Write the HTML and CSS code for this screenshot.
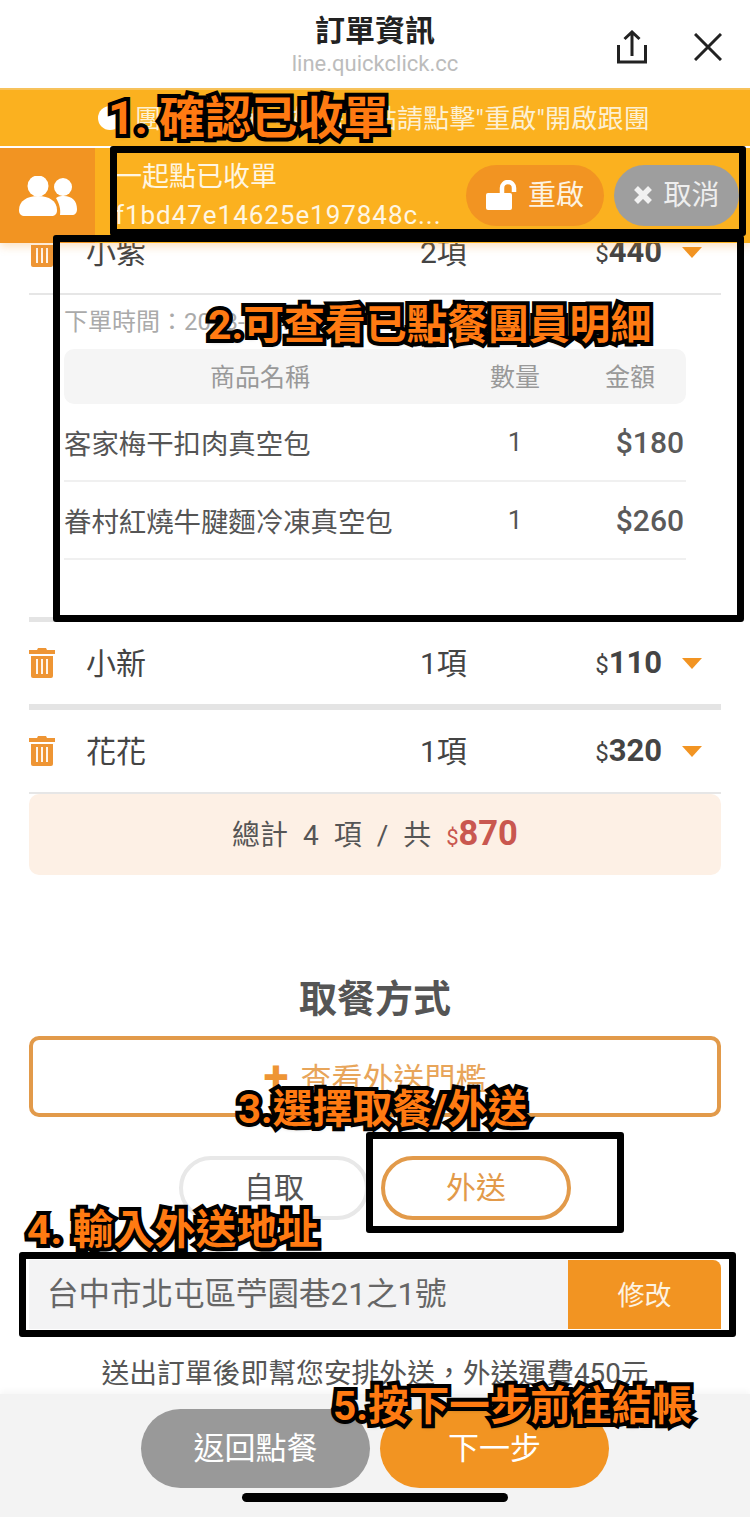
FILE: index.html
```html
<!DOCTYPE html>
<html lang="zh-Hant">
<head>
<meta charset="utf-8">
<title>訂單資訊</title>
<link rel="stylesheet" href="styles.css">
</head>
<body>
<div class="app">
  <header class="nav">
    <div></div>
    <div class="nav-title">
      <div class="nav-name">訂單資訊</div>
      <div class="nav-host">line.quickclick.cc</div>
    </div>
    <div class="nav-actions">
      <svg class="share" viewBox="0 0 30 34" width="30" height="34"><path d="M1.500 15v17h27V15M15 26V2M7.500 9 15 2l7.500 7" fill="none" stroke="#222" stroke-width="3"/></svg>
      <svg class="close" viewBox="0 0 28 28" width="28" height="28"><path d="M1 1l26 26M27 1 1 27" fill="none" stroke="#222" stroke-width="3"/></svg>
    </div>
  </header>

  <div class="top">
    <div class="notice">
      <span class="notice-dot"></span>
      <span class="notice-text">團長已收單，如需加點請點擊"重啟"開啟跟團</span>
    </div>
    <div class="group">
      <div class="group-icon">
        <svg viewBox="0 0 58 40" width="58" height="40" fill="#fff"><circle cx="19" cy="10" r="10.500"/><circle cx="44" cy="11" r="9"/><path d="M0 34c0-9 8-14 19-14s19 5 19 14c0 4-2 6-6 6H6c-4 0-6-2-6-6z"/><path d="M37 22c3-2 5-2 8-2 8 0 13 5 13 13 0 4-2 6-5 6H41c1-6-1-12-4-17z"/></svg>
      </div>
      <div class="group-info">
        <div>一起點已收單</div>
        <div class="group-id">f1bd47e14625e197848c...</div>
      </div>
      <button class="pill pill-reopen">
        <svg viewBox="0 0 32 30" width="32" height="30"><rect x="0" y="13" width="26" height="17" rx="2" fill="#fff"/><path d="M16 14V8a6 6 0 0 1 12 0v4" fill="none" stroke="#fff" stroke-width="4.500"/></svg>
        <span class="pill-label">重啟</span>
      </button>
      <button class="pill pill-cancel">
        <svg viewBox="0 0 20 20" width="20" height="20"><path d="M3 3l14 14M17 3 3 17" stroke="#f1f1f1" stroke-width="5.500" fill="none"/></svg>
        <span class="pill-label">取消</span>
      </button>
    </div>
  </div>

  <main class="orders">
    <div class="order order-line">
      <svg class="trash" viewBox="0 0 26 30"><path d="M9 0h8l1 2h8v4H0V2h8z" fill="#ee9534"/><path d="M2 8h22v20a2 2 0 0 1-2 2H4a2 2 0 0 1-2-2z" fill="#ee9534"/><path d="M8 11v15M13 11v15M18 11v15" stroke="#fff" stroke-width="1.800"/></svg>
      <span class="order-name">小紫</span>
      <span class="order-count">2項</span>
      <span class="order-price"><small>$</small><b>440</b></span>
      <span class="caret"></span>
    </div>
    <section class="detail">
      <div class="detail-time">下單時間：2023-03-10</div>
      <div class="grid-row grid-head">
        <span>商品名稱</span><span>數量</span><span>金額</span>
      </div>
      <div class="grid-row grid-item">
        <span>客家梅干扣肉真空包</span><span class="qty">1</span><span class="amt">$180</span>
      </div>
      <div class="grid-row grid-item">
        <span>眷村紅燒牛腱麵冷凍真空包</span><span class="qty">1</span><span class="amt">$260</span>
      </div>
    </section>
    <div class="order order-thick">
      <svg class="trash" viewBox="0 0 26 30"><path d="M9 0h8l1 2h8v4H0V2h8z" fill="#ee9534"/><path d="M2 8h22v20a2 2 0 0 1-2 2H4a2 2 0 0 1-2-2z" fill="#ee9534"/><path d="M8 11v15M13 11v15M18 11v15" stroke="#fff" stroke-width="1.800"/></svg>
      <span class="order-name">小新</span>
      <span class="order-count">1項</span>
      <span class="order-price"><small>$</small><b>110</b></span>
      <span class="caret"></span>
    </div>
    <div class="order order-line">
      <svg class="trash" viewBox="0 0 26 30"><path d="M9 0h8l1 2h8v4H0V2h8z" fill="#ee9534"/><path d="M2 8h22v20a2 2 0 0 1-2 2H4a2 2 0 0 1-2-2z" fill="#ee9534"/><path d="M8 11v15M13 11v15M18 11v15" stroke="#fff" stroke-width="1.800"/></svg>
      <span class="order-name">花花</span>
      <span class="order-count">1項</span>
      <span class="order-price"><small>$</small><b>320</b></span>
      <span class="caret"></span>
    </div>
    <div class="total"><span>總計 4 項 / 共 <span class="total-sum"><small>$</small><b>870</b></span></span></div>

    <h2 class="pick-title">取餐方式</h2>
    <button class="threshold"><span class="plus">+</span>查看外送門檻</button>
    <div class="toggle">
      <button class="toggle-btn">自取</button>
      <button class="toggle-btn toggle-on">外送</button>
    </div>
    <div class="address">
      <span class="address-text">台中市北屯區苧園巷21之1號</span>
      <button class="address-edit">修改</button>
    </div>
    <p class="hint">送出訂單後即幫您安排外送，外送運費450元</p>
  </main>

  <footer class="bottom">
    <div class="bottom-btns">
      <button class="cta cta-back">返回點餐</button>
      <button class="cta cta-next">下一步</button>
    </div>
    <div class="home"></div>
  </footer>

  <div class="frame frame-1"></div>
  <div class="frame frame-2"></div>
  <div class="frame frame-3"></div>
  <div class="frame frame-4"></div>
  <div class="callout callout-1">1. 確認已收單</div>
  <div class="callout callout-2">2.可查看已點餐團員明細</div>
  <div class="callout callout-3">3.選擇取餐/外送</div>
  <div class="callout callout-4">4. 輸入外送地址</div>
  <div class="callout callout-5">5.按下一步前往結帳</div>
</div>
</body>
</html>
```
FILE: styles.css
```css
* { box-sizing: border-box; }
html, body { margin: 0; padding: 0; background: #fff; }
body { font-family: Roboto, "Noto Sans CJK TC", sans-serif; color: #444; }
button { font-family: inherit; border: 0; padding: 0; background: none; }
.app { position: relative; width: 750px; height: 1517px; overflow: hidden; background: #fff; }

.nav { height: 88px; display: grid; grid-template-columns: 1fr auto 1fr; align-items: start; background: #fff; position: relative; z-index: 3; }
.nav-title { text-align: center; padding-top: 11px; }
.nav-name { font-size: 30px; line-height: 40px; font-weight: 700; color: #222; }
.nav-host { font-size: 22px; line-height: 26px; color: #bcbcbc; }
.nav-actions { display: flex; justify-content: flex-end; gap: 47px; padding: 30px 28px 0 0; }
.close { margin-top: 3px; }

.top { position: relative; z-index: 2; box-shadow: 0 4px 8px rgba(242, 148, 34, .25); }
.notice { height: 58px; background: #fbb11f; border-top: 2px solid #f7c25b; display: flex; align-items: center; gap: 13px; padding: 0 0 4px 98px; font-size: 26px; color: #fdf0d2; white-space: nowrap; }
.notice-dot { width: 24px; height: 24px; border-radius: 50%; background: #fff; flex: none; margin-top: 4px; }
.notice-text { letter-spacing: .2px; }
.group { margin-top: 2px; height: 95px; background: #fbb11f; display: flex; align-items: center; }
.group-icon { width: 95px; height: 95px; background: #f29422; display: flex; align-items: center; justify-content: center; flex: none; }
.group-info { width: 351px; margin-left: 20px; font-size: 27px; line-height: 38px; color: #fff6e2; white-space: nowrap; flex: none; }
.group-id { font-size: 26px; letter-spacing: .95px; }
.pill { height: 61px; border-radius: 31px; display: flex; align-items: center; justify-content: center; font-size: 28px; color: #fdf3e2; flex: none; margin-top: -1px; }
.pill-label { position: relative; top: -2px; }
.pill-reopen { width: 138px; background: #f29422; gap: 10px; }
.pill-cancel { width: 125px; background: #9e9e9e; gap: 10px; margin-left: 10px; color: #eee; }

.orders { margin: -32px 29px 0; position: relative; z-index: 1; }
.order { height: 84px; display: grid; grid-template-columns: 57px 334px 100px 142px 59px; align-items: center; font-size: 30px; color: #444; }
.order-line { height: 84px; border-bottom: 2px solid #e6e6e6; }
.order-thick { height: 88px; border-bottom: 6px solid #e4e4e4; }
.trash { width: 26px; height: 30px; display: block; }
.order-name, .order-count { position: relative; top: -2px; }
.order-price { justify-self: end; white-space: nowrap; position: relative; top: -1px; }
.order-price small { font-size: 24px; }
.order-price b { font-size: 31px; font-weight: 700; }
.caret { margin-left: 20px; width: 0; height: 0; border-left: 10px solid transparent; border-right: 10px solid transparent; border-top: 11px solid #f29422; }

.detail { height: 327px; padding: 0 35px; border-bottom: 5px solid #e4e4e4; }
.detail-time { height: 54px; line-height: 54px; font-size: 24px; color: #aaa; }
.grid-row { display: grid; grid-template-columns: 392px 118px 112px; align-items: center; }
.grid-head { height: 55px; padding-bottom: 3px; background: #f5f5f5; border-radius: 10px; font-size: 25px; color: #999; text-align: center; }
.grid-item { height: 78px; border-bottom: 2px solid #f0f0f0; font-size: 27.400px; color: #555; }
.qty { text-align: center; font-size: 26px; }
.amt { text-align: right; padding-right: 2px; font-size: 30px; font-weight: 500; color: #5a5a5a; }

.total { height: 81px; padding-bottom: 3px; background: #fdf0e5; border-radius: 10px; display: flex; align-items: center; justify-content: center; font-size: 28px; word-spacing: 8px; color: #555; white-space: pre; }
.total-sum { color: #c9574f; }
.total-sum small { font-size: 22px; }
.total-sum b { font-size: 34.500px; font-weight: 700; }

.pick-title { margin: 99px 0 0; height: 50px; line-height: 50px; text-align: center; font-size: 38px; font-weight: 700; color: #555; }
.threshold { display: flex; align-items: center; justify-content: center; width: 100%; height: 81px; margin-top: 12px; border: 4px solid #e29a4a; border-radius: 10px; font-size: 31px; color: #e8a55a; }
.plus { font-size: 46px; font-weight: 700; color: #ee9534; margin-right: 12px; line-height: 1; }
.toggle { display: flex; justify-content: center; gap: 12px; margin-top: 39px; }
.toggle-btn { width: 190px; height: 64px; padding-bottom: 7px; border: 4px solid #e8e8e8; border-radius: 32px; font-size: 30px; color: #555; background: #fff; }
.toggle-on { border-color: #e29a4a; color: #e29a4a; }
.address { display: flex; height: 69px; margin-top: 40px; background: #f3f3f4; border-top-right-radius: 8px; }
.address-text { flex: 1; padding-left: 18px; font-size: 31.500px; line-height: 69px; color: #666; }
.address-edit { width: 153px; background: #f29422; color: #fdf3e2; font-size: 27px; padding-bottom: 2px; border-top-right-radius: 8px; }
.hint { margin: 26px 0 0; height: 38px; line-height: 38px; font-size: 27.800px; color: #555; text-align: center; white-space: nowrap; }

.bottom { position: relative; z-index: 2; margin-top: 1px; height: 124px; padding-top: 15px; background: #f3f3f3; box-shadow: 0 -3px 6px rgba(0, 0, 0, .04); }
.bottom-btns { display: flex; justify-content: center; gap: 10px; }
.cta { width: 229px; height: 79px; padding-bottom: 6px; border-radius: 40px; font-size: 31px; color: #fff; }
.cta-back { background: #999; }
.cta-next { background: #f29422; }
.home { width: 266px; height: 9px; margin: 5px auto 0; border-radius: 5px; background: #000; }

.frame { position: absolute; z-index: 5; border: 7px solid #000; border-radius: 3px; }
.frame-1 { left: 110px; top: 146px; width: 636px; height: 90px; }
.frame-2 { left: 53px; top: 235px; width: 691px; height: 387px; }
.frame-3 { left: 366px; top: 1132px; width: 258px; height: 101px; }
.frame-4 { left: 19px; top: 1252px; width: 717px; height: 85px; }

.callout { position: absolute; z-index: 6; white-space: nowrap; font-weight: 700; color: #ff7a12; -webkit-text-stroke: 8px #000; paint-order: stroke fill; text-shadow: 0 2px 4px rgba(0, 0, 0, .5); line-height: 1.2; }
.callout-1 { left: 108px; top: 91px; font-size: 46px; }
.callout-2 { left: 208px; top: 301px; font-size: 40.800px; }
.callout-3 { left: 238px; top: 1086px; font-size: 40px; }
.callout-4 { left: 27px; top: 1206px; font-size: 41px; }
.callout-5 { left: 333px; top: 1382px; font-size: 40.600px; }
```
